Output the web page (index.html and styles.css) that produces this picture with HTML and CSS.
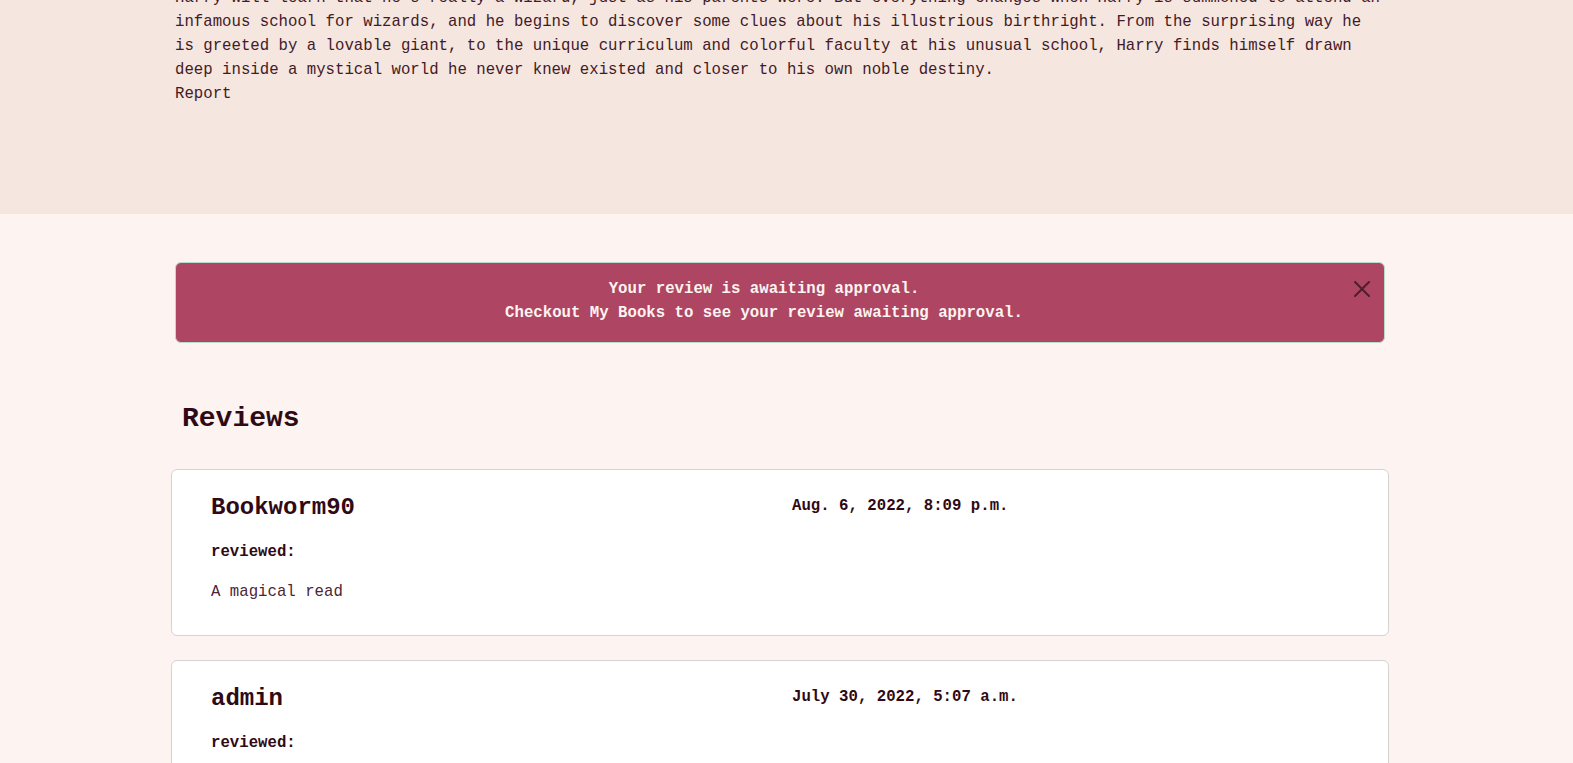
FILE: index.html
```html
<!DOCTYPE html>
<html lang="en">
<head>
<meta charset="utf-8">
<title>Book detail</title>
<link rel="stylesheet" href="styles.css">
</head>
<body>
<section class="book-detail">
  <div class="container">
    <p class="summary">Harry will learn that he's really a wizard, just as his parents were. But everything changes when Harry is summoned to attend an infamous school for wizards, and he begins to discover some clues about his illustrious birthright. From the surprising way he is greeted by a lovable giant, to the unique curriculum and colorful faculty at his unusual school, Harry finds himself drawn deep inside a mystical world he never knew existed and closer to his own noble destiny.</p>
    <a class="report" href="#">Report</a>
  </div>
</section>
<main class="reviews-section">
  <div class="container">
    <div class="alert">
      <div class="alert-text">
        <div>Your review is awaiting approval.</div>
        <div>Checkout My Books to see your review awaiting approval.</div>
      </div>
      <button class="btn-close" type="button" aria-label="Close">
        <svg width="16" height="16" viewBox="0 0 16 16"><path d="M.293.293a1 1 0 0 1 1.414 0L8 6.586 14.293.293a1 1 0 1 1 1.414 1.414L9.414 8l6.293 6.293a1 1 0 0 1-1.414 1.414L8 9.414l-6.293 6.293a1 1 0 0 1-1.414-1.414L6.586 8 .293 1.707a1 1 0 0 1 0-1.414z"/></svg>
      </button>
    </div>
    <h3 class="reviews-title">Reviews</h3>
    <div class="review-card">
      <div class="review-head">
        <h4 class="reviewer">Bookworm90</h4>
        <div class="review-date">Aug. 6, 2022, 8:09 p.m.</div>
      </div>
      <h6 class="reviewed">reviewed:</h6>
      <p class="review-body">A magical read</p>
    </div>
    <div class="review-card">
      <div class="review-head">
        <h4 class="reviewer">admin</h4>
        <div class="review-date">July 30, 2022, 5:07 a.m.</div>
      </div>
      <h6 class="reviewed">reviewed:</h6>
      <p class="review-body">A wonderful start to the series</p>
    </div>
  </div>
</main>
</body>
</html>
```
FILE: styles.css
```css
* { box-sizing: border-box; }
html, body { margin: 0; padding: 0; }
body {
  background: #fdf3f0;
  font-family: "Liberation Mono", "Courier New", monospace;
  font-size: 15.7px;
  line-height: 24px;
  color: #431a27;
}
.container {
  width: 1210px;
  margin-left: 175px;
}
.book-detail {
  background: #f5e6e0;
  padding-bottom: 108px;
}
.summary {
  margin: -14px 0 0;
}
.report {
  display: block;
  color: #431a27;
  text-decoration: none;
}
.reviews-section {
  padding-top: 48px;
  padding-bottom: 40px;
}
.alert {
  position: relative;
  background: #ad4563;
  border: 1px solid #badbcc;
  border-radius: 6px;
  padding: 14px 48px 17px 16px;
  color: #fdf3f0;
  font-weight: bold;
  text-align: center;
}
.btn-close {
  position: absolute;
  top: 18px;
  right: 14px;
  width: 16px;
  height: 16px;
  padding: 0;
  border: 0;
  background: none;
  opacity: 0.55;
  cursor: pointer;
}
.btn-close svg { display: block; fill: #000; }
.reviews-title {
  margin: 59px 0 33px;
  padding-left: 7px;
  font-size: 28px;
  line-height: 34px;
  font-weight: bold;
  color: #2f0a15;
}
.review-card {
  margin: 0 -4px 24px;
  background: #fff;
  border: 1px solid #d4d4d4;
  border-radius: 6px;
  padding: 23px 39px 31px;
}
.review-head {
  display: grid;
  grid-template-columns: 1fr 1fr;
  column-gap: 24px;
}
.reviewer {
  margin: 0;
  font-size: 24px;
  line-height: 29px;
  font-weight: bold;
  color: #2f0a15;
}
.review-date {
  padding-top: 1px;
  font-weight: bold;
  color: #2f0a15;
}
.reviewed {
  margin: 18px 0 0;
  font-size: 15.7px;
  line-height: 24px;
  font-weight: bold;
  color: #2f0a15;
}
.review-body {
  margin: 16px 0 0;
  color: #4a2638;
}
```
